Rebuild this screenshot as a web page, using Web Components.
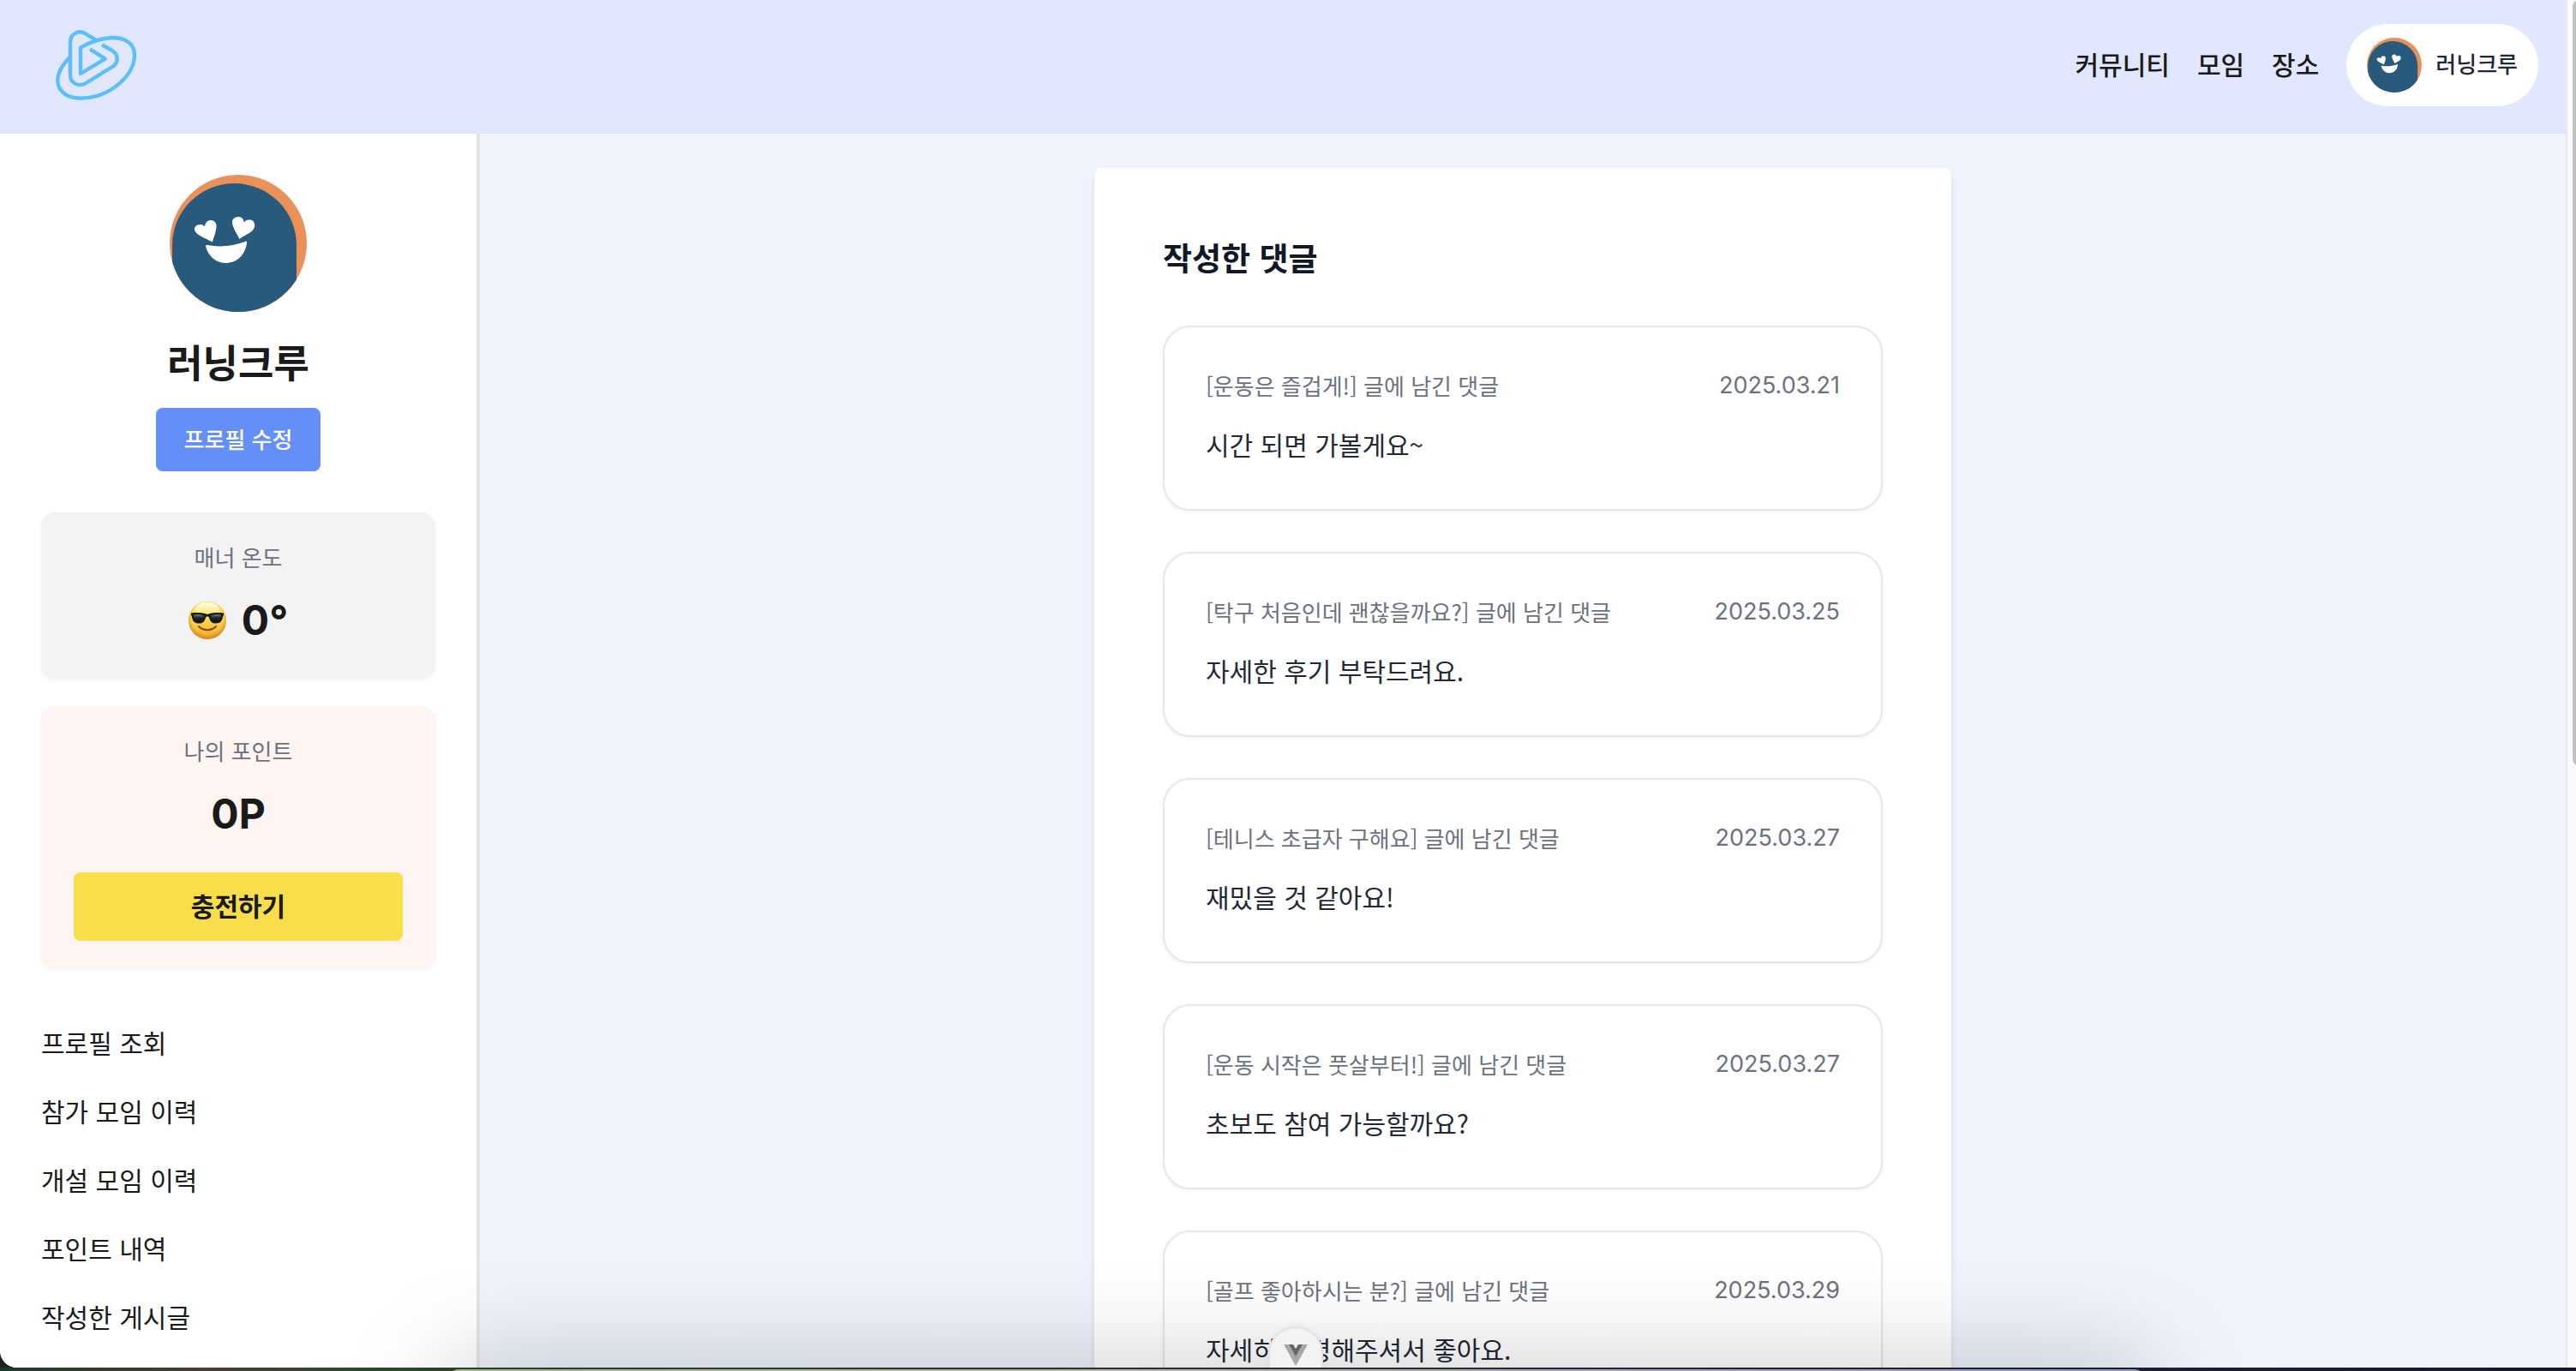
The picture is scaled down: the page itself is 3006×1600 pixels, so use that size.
<!DOCTYPE html>
<html lang="ko">
<head>
<meta charset="utf-8">
<title>작성한 댓글</title>
<style>
  html, body { margin: 0; height: 100%; overflow: hidden; }
  body {
    background: #1d2427;
    color: #1a1a1a;
    font-family: "Noto Sans CJK KR", "Noto Sans", sans-serif;
    --num: Inter, "Noto Sans CJK KR", sans-serif;
  }
</style>
</head>
<body>
<app-window>
  <site-header slot="header">
    <nav-link href="#community">커뮤니티</nav-link>
    <nav-link href="#meetings">모임</nav-link>
    <nav-link href="#places">장소</nav-link>
    <user-chip slot="user">러닝크루</user-chip>
  </site-header>
  <profile-sidebar slot="sidebar">
    <span slot="name">러닝크루</span>
    <span slot="edit">프로필 수정</span>
    <stat-card slot="stats">
      <span slot="label">매너 온도</span>
      <cool-face slot="icon"></cool-face>
      <span>0°</span>
    </stat-card>
    <stat-card slot="stats" action="충전하기" tone="point">
      <span slot="label">나의 포인트</span>
      <span>0P</span>
    </stat-card>
    <menu-link href="#profile">프로필 조회</menu-link>
    <menu-link href="#joined">참가 모임 이력</menu-link>
    <menu-link href="#opened">개설 모임 이력</menu-link>
    <menu-link href="#points">포인트 내역</menu-link>
    <menu-link href="#posts">작성한 게시글</menu-link>
  </profile-sidebar>
  <comment-panel>
    <span slot="title">작성한 댓글</span>
    <comment-card date="2025.03.21"><span slot="source">[운동은 즐겁게!] 글에 남긴 댓글</span>시간 되면 가볼게요~</comment-card>
    <comment-card date="2025.03.25"><span slot="source">[탁구 처음인데 괜찮을까요?] 글에 남긴 댓글</span>자세한 후기 부탁드려요.</comment-card>
    <comment-card date="2025.03.27"><span slot="source">[테니스 초급자 구해요] 글에 남긴 댓글</span>재밌을 것 같아요!</comment-card>
    <comment-card date="2025.03.27"><span slot="source">[운동 시작은 풋살부터!] 글에 남긴 댓글</span>초보도 참여 가능할까요?</comment-card>
    <comment-card date="2025.03.29"><span slot="source">[골프 좋아하시는 분?] 글에 남긴 댓글</span>자세히 설명해주셔서 좋아요.</comment-card>
  </comment-panel>
</app-window>
<desktop-edge></desktop-edge>

<script>
const define = (name, render) => customElements.define(name, class extends HTMLElement {
  constructor() {
    super();
    this.attachShadow({ mode: 'open' });
  }
  connectedCallback() {
    if (this.shadowRoot.childNodes.length) return;
    const t = document.createElement('template');
    t.innerHTML = render(this);
    this.shadowRoot.append(t.content.cloneNode(true));
  }
});

define('brand-logo', () => `
  <style>:host{display:block;width:130px;height:120px} svg{display:block;width:100%;height:100%}</style>
  <svg viewBox="-6 -12 390 360" fill="none" stroke="#5bbffc" stroke-width="13" stroke-linejoin="round" role="img" aria-label="홈">
    <path d="M94 141C62 174 51 202 52 224C54 266 92 284 131 284C232 284 321 206 321 133C321 92 288 72 243 72C205 73 166 87 132 107V198L218 146L165 112"/>
    <path d="M184 79L151 59C126 42 96 58 96 88V204C96 232 127 246 151 231L243 174C266 160 266 132 243 117L207 97"/>
  </svg>`);

define('user-avatar', () => `
  <style>
    :host{display:block;width:160px;height:160px;border-radius:50%;overflow:hidden;flex:none}
    svg{display:block;width:100%;height:100%}
  </style>
  <svg viewBox="0 0 160 160" aria-hidden="true">
    <rect width="160" height="160" fill="#e99158"/>
    <path d="M3 160V82A72.500 72 0 0 1 148 82V160Z" fill="#285a7e"/>
    <g fill="#fff">
      <path d="M50 78.500C44 75 34 72 30 66.500C27 61 31 58 36 58C39 58 41 60 41 61C41 56 44 53 48 53C52 53 55 56 54.500 61C54 68 51 73 50 78.500Z"/>
      <path d="M81.500 75C78 68 73 61 73 55C73 51 77 49 80 49C84 49 87 52 86.500 56C88 53 91 52 94 52.500C98 53 100 57 99 61C97 68 87 70 81.500 75Z"/>
      <path d="M44 82C60 85 74 83 88 78C90 77 90.500 78 90 80C88 94 78 103 65 103C53 103 44 93 42 83C42 82 43 81.800 44 82Z"/>
    </g>
  </svg>`);

define('cool-face', () => `
  <style>:host{display:block;width:44px;height:44px} svg{display:block;width:100%;height:100%}</style>
  <svg viewBox="0 0 44 44" role="img" aria-label="선글라스를 낀 얼굴">
    <defs>
      <linearGradient id="f" x1="0" y1="0" x2="0" y2="1"><stop offset="0" stop-color="#fdf06a"/><stop offset=".5" stop-color="#fbd84f"/><stop offset="1" stop-color="#eda22f"/></linearGradient>
      <radialGradient id="r" cx=".5" cy=".45" r=".55"><stop offset=".75" stop-color="#d8861d" stop-opacity="0"/><stop offset="1" stop-color="#d07f1d" stop-opacity=".85"/></radialGradient>
      <linearGradient id="h" x1="0" y1="0" x2="0" y2="1"><stop offset="0" stop-color="#fff" stop-opacity=".85"/><stop offset="1" stop-color="#fff" stop-opacity="0"/></linearGradient>
      <linearGradient id="g" x1="0" y1="0" x2="0" y2="1"><stop offset="0" stop-color="#777"/><stop offset=".5" stop-color="#222"/><stop offset="1" stop-color="#111"/></linearGradient>
    </defs>
    <circle cx="22" cy="22" r="22" fill="url(#f)"/><circle cx="22" cy="22" r="22" fill="url(#r)"/>
    <ellipse cx="22" cy="9" rx="14" ry="8" fill="url(#h)"/>
    <path d="M3 13.500C10 12.500 17 13 22 15C27 13 34 12.500 41 13.500V16C40 17 40 18 39.500 20C38.500 24 36 25.500 31.500 25.500C27 25.500 25 23 24 18.500C23.500 17 20.500 17 20 18.500C19 23 17 25.500 12.500 25.500C8 25.500 5.500 24 4.500 20C4 18 4 17 3 16Z" fill="#191919"/>
    <path d="M6 15.500C10 14.500 15 15 18 16.500C17.500 21 16 23.500 12.500 23.500C8 23.500 6 21 6 15.500ZM38 15.500C34 14.500 29 15 26 16.500C26.500 21 28 23.500 31.500 23.500C36 23.500 38 21 38 15.500Z" fill="url(#g)"/>
    <path d="M12 29C17 34.500 27 34.500 32 29" fill="none" stroke="#874a15" stroke-width="2" stroke-linecap="round"/>
  </svg>`);

define('nav-link', el => `
  <style>:host{display:block;padding-bottom:4px} a{display:block;color:#1a1a1a;text-decoration:none;font-size:30px;line-height:48px;font-weight:500}</style>
  <a href="${el.getAttribute('href')}"><slot></slot></a>`);

define('user-chip', () => `
  <style>
    :host{display:block}
    button{display:flex;align-items:center;gap:16px;border:0;border-radius:48px;background:#fff;padding:16px 24px;
      font:500 26px/40px "Noto Sans CJK KR",sans-serif;color:#1f2937}
    user-avatar{width:64px;height:64px}
    span{padding-bottom:4px}
  </style>
  <button type="button"><user-avatar></user-avatar><span><slot></slot></span></button>`);

define('site-header', () => `
  <style>
    :host{display:block;background:#e0e7ff}
    header{display:flex;align-items:center;justify-content:space-between;height:156px;box-sizing:border-box;padding:0 32px 4px 48px}
    a{display:block}
    nav{display:flex;align-items:center;gap:32px}
  </style>
  <header><a href="#home"><brand-logo></brand-logo></a><nav><slot></slot><slot name="user"></slot></nav></header>`);

define('stat-card', el => `
  <style>
    :host{display:flex;flex-direction:column;border-radius:16px;padding:32px 38px;text-align:center;
      background:#f3f3f3;box-shadow:0 2px 4px rgba(0,0,0,.05)}
    :host([tone=point]){background:#fef5f2}
    .label{font-size:26px;line-height:40px;color:#6b7280}
    .value{display:flex;align-items:center;justify-content:center;gap:18px;margin-top:18px;font:700 48px/72px var(--num)}
    button{height:80px;margin-top:32px;border:0;border-radius:8px;background:#f8de4b;color:#1a1a1a;padding:0 0 4px;
      font:700 30px/48px "Noto Sans CJK KR",sans-serif}
  </style>
  <div class="label"><slot name="label"></slot></div>
  <div class="value"><slot name="icon"></slot><slot></slot></div>
  ${el.hasAttribute('action') ? `<button type="button">${el.getAttribute('action')}</button>` : ''}`);

define('menu-link', el => `
  <style>:host{display:block} a{display:block;color:#1a1a1a;text-decoration:none;font-size:30px;line-height:48px}</style>
  <a href="${el.getAttribute('href')}"><slot></slot></a>`);

define('profile-sidebar', () => `
  <style>
    :host{display:block;flex:none;width:560px;box-sizing:border-box;background:#fff;border-right:4px solid #e5e5e5;padding:48px}
    .me{display:flex;flex-direction:column;align-items:center}
    h1{margin:22px 0 18px;font-size:45px;line-height:72px;font-weight:700}
    button{border:0;border-radius:8px;min-width:192px;padding:15px 32px 17px;background:#648ff7;color:#fff;
      font:500 26px/42px "Noto Sans CJK KR",sans-serif}
    .stats{display:flex;flex-direction:column;gap:32px;margin-top:48px}
    nav{display:flex;flex-direction:column;gap:32px;margin-top:62px}
  </style>
  <div class="me"><user-avatar></user-avatar><h1><slot name="name"></slot></h1><button type="button"><slot name="edit"></slot></button></div>
  <div class="stats"><slot name="stats"></slot></div>
  <nav><slot></slot></nav>`);

define('comment-card', el => `
  <style>
    :host{display:block;border:2px solid #e5e7eb;border-radius:32px;padding:48px 48px 54px;background:#fff;box-shadow:0 2px 4px rgba(0,0,0,.05)}
    .top{display:flex;justify-content:space-between;color:#6b7280;font-size:26px;line-height:40px}
    time{font:400 27px/40px var(--num)}
    p{margin:26px 0 0;font-size:30px;line-height:44px;color:#1f2937}
  </style>
  <article><div class="top"><slot name="source"></slot><time>${el.getAttribute('date')}</time></div><p><slot></slot></p></article>`);

define('comment-panel', () => `
  <style>
    :host{display:block;width:1000px;box-sizing:border-box;margin:40px auto;padding:76px 80px 80px;background:#fff;border-radius:8px;
      box-shadow:0 8px 12px -2px rgba(0,0,0,.1),0 4px 8px -4px rgba(0,0,0,.1)}
    h2{margin:0 0 52px;font-size:37px;line-height:56px;font-weight:700;color:#111827}
    .list{display:flex;flex-direction:column;gap:48px}
  </style>
  <h2><slot name="title"></slot></h2><div class="list"><slot></slot></div>`);

define('scroll-rail', () => `
  <style>
    :host{display:block;flex:none;width:10px;background:#fafafa;border-left:2px solid #e8e8e8;overflow:hidden}
    div{width:16px;height:56%;margin:0 0 0 6px;border-radius:8px;background:#c1c1c1}
  </style><div></div>`);

define('app-window', () => `
  <style>
    :host{display:flex;height:calc(100vh - 4px);border-radius:0 0 0 20px;overflow:hidden;background:#eff3fc}
    .page{flex:1;min-width:0}
    .body{display:flex;align-items:stretch;min-height:100vh}
    main{flex:1;min-width:0}
  </style>
  <div class="page"><slot name="header"></slot><div class="body"><slot name="sidebar"></slot><main><slot></slot></main></div></div>
  <scroll-rail></scroll-rail>`);

/* Devtools toggle and the dock, both floating over the bottom edge of the window. */
define('desktop-edge', () => `
  <style>
    :host{position:fixed;inset:auto 0 0 0;height:4px;background:linear-gradient(90deg,#1f3a2a,#4a3d33 8%,#2d4a2a 14%,#333 50%,#1c1f33 85%,#14162a)}
    .dock{position:absolute;top:2px;left:520px;right:500px;height:80px;border-radius:16px;
      background:linear-gradient(90deg,#a3b08c,#b4b4ae 40%,#8f96b8);box-shadow:0 0 120px rgba(0,0,0,.25)}
    button{position:absolute;left:1480px;bottom:-14px;width:64px;height:66px;border:2px solid #e2e2e2;border-radius:32px 32px 0 0;
      background:#f3f3f3;padding:0;box-shadow:0 0 16px rgba(0,0,0,.06);clip-path:inset(-30px -30px 18px -30px)}
    svg{display:block;width:28px;height:26px;margin:0 auto}
  </style>
  <div class="dock"></div>
  <button type="button" aria-label="개발자 도구"><svg viewBox="0 0 28 26"><path d="M0 1H6L14 14L22 1H28L14 26Z" fill="#a8a8a8"/><path d="M6 1H11L14 6L17 1H22L14 15Z" fill="#666"/></svg></button>`);
</script>
</body>
</html>
